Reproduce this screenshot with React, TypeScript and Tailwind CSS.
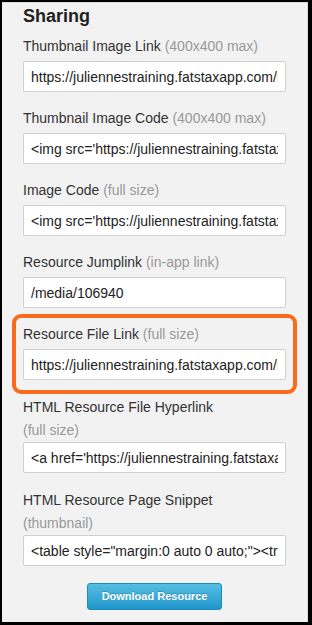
const url = "https://juliennestraining.fatstaxapp.com/media/106940/file";

const fields: {
  label: string;
  note: string;
  value: string;
  highlight?: boolean;
  wrap?: boolean;
}[] = [
  { label: "Thumbnail Image Link", note: "(400x400 max)", value: url },
  {
    label: "Thumbnail Image Code",
    note: "(400x400 max)",
    value: `<img src='${url}' />`,
  },
  { label: "Image Code", note: "(full size)", value: `<img src='${url}' />` },
  { label: "Resource Jumplink", note: "(in-app link)", value: "/media/106940" },
  { label: "Resource File Link", note: "(full size)", value: url, highlight: true },
  {
    label: "HTML Resource File Hyperlink",
    note: "(full size)",
    value: `<a href='${url}'>Download</a>`,
    wrap: true,
  },
  {
    label: "HTML Resource Page Snippet",
    note: "(thumbnail)",
    value: `<table style="margin:0 auto 0 auto;"><tr><td>`,
    wrap: true,
  },
];

function Field({
  label,
  note,
  value,
  wrap,
}: {
  label: string;
  note: string;
  value: string;
  wrap?: boolean;
}) {
  return (
    <div>
      {wrap ? (
        <p className="text-[14px] leading-[23px] text-[#333]">
          {label}
          <span className="block text-[#999]">{note}</span>
        </p>
      ) : (
        <p className="mb-[4px] text-[14px] leading-[21px] text-[#333]">
          {label} <span className="text-[#999]">{note}</span>
        </p>
      )}
      <input
        readOnly
        value={value}
        className="block h-[31px] w-full rounded-[2px] border border-[#d0d0d0] bg-white px-[7px] text-[14px] text-[#222] outline-none"
      />
    </div>
  );
}

export default function App() {
  return (
    <div className="h-[625px] w-[312px] bg-black pb-[3px] pl-[2px] pr-[4px] pt-[2px] font-['Liberation_Sans',Arial,sans-serif]">
      <div className="h-full border-r border-t border-[#dcdcdc] bg-[#f2f2f2] px-[21px] pt-[3px]">
        <h2 className="text-[18px] font-bold leading-[20px] text-[#222]">Sharing</h2>
        <div className="mt-[10px] flex flex-col gap-[16px]">
          {fields.map((f) =>
            f.highlight ? (
              <div
                key={f.label}
                className="-mx-[11px] -mb-[14px] -mt-[10px] rounded-[9px] border-4 border-[#fa6a1c] px-[7px] pb-[10px] pt-[6px]"
              >
                <Field label={f.label} note={f.note} value={f.value} />
              </div>
            ) : (
              <Field
                key={f.label}
                label={f.label}
                note={f.note}
                value={f.value}
                wrap={f.wrap}
              />
            )
          )}
        </div>
        <div className="mt-[17px] flex justify-center">
          <button className="h-[27px] w-[135px] rounded-[3px] border border-[#1e8bbd] bg-gradient-to-b from-[#55bfe2] to-[#1e96cc] text-[11px] font-bold text-white [text-shadow:0_-1px_0_rgba(0,0,0,0.2)]">
            Download Resource
          </button>
        </div>
      </div>
    </div>
  );
}
